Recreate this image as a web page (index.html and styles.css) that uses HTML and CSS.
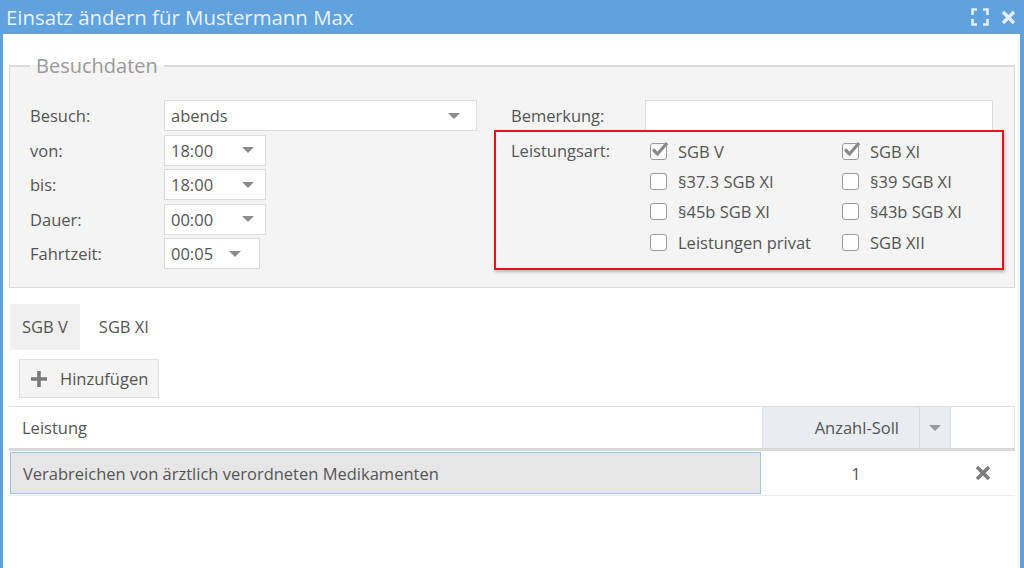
FILE: index.html
```html
<!DOCTYPE html>
<html lang="de">
<head>
  <meta charset="UTF-8" />
  <title>Einsatz ändern</title>
  <link rel="stylesheet" href="styles.css">
</head>
<body>
  <div class="window">
    <div class="titlebar">
      <span class="title">Einsatz ändern für Mustermann Max</span>
      <div class="tools">
        <svg width="18" height="18" viewBox="0 0 18 18"><path d="M1.5 7V1.5H6M12 1.5h4.5V7M16.5 11v5.5H12M6 16.5H1.5V11" fill="none" stroke="currentColor" stroke-width="2.6"/></svg>
        <svg width="15" height="15" viewBox="0 0 15 15"><path d="M2 2l11 11M13 2L2 13" stroke="currentColor" stroke-width="3.4"/></svg>
      </div>
    </div>

    <div class="content">
      <fieldset class="visit">
        <legend>Besuchdaten</legend>
        <div class="visit-body">
          <div class="times">
            <div class="row"><label>Besuch:</label><div class="select wide">abends<i class="caret"></i></div></div>
            <div class="row"><label>von:</label><div class="select">18:00<i class="caret"></i></div></div>
            <div class="row"><label>bis:</label><div class="select">18:00<i class="caret"></i></div></div>
            <div class="row"><label>Dauer:</label><div class="select">00:00<i class="caret"></i></div></div>
            <div class="row"><label>Fahrtzeit:</label><div class="select short">00:05<i class="caret"></i></div></div>
          </div>

          <div class="extra">
            <div class="row note"><label>Bemerkung:</label><div class="textbox"></div></div>
            <div class="types">
              <label class="types-label">Leistungsart:</label>
              <div class="checks">
                <div class="check on"><span class="box"><svg width="18" height="16" viewBox="0 0 18 16"><path d="M2 8.5l4.5 4.5L16 2" fill="none" stroke="#8a8a8a" stroke-width="3.2"/></svg></span>SGB V</div>
                <div class="check on"><span class="box"><svg width="18" height="16" viewBox="0 0 18 16"><path d="M2 8.5l4.5 4.5L16 2" fill="none" stroke="#8a8a8a" stroke-width="3.2"/></svg></span>SGB XI</div>
                <div class="check"><span class="box"></span>§37.3 SGB XI</div>
                <div class="check"><span class="box"></span>§39 SGB XI</div>
                <div class="check"><span class="box"></span>§45b SGB XI</div>
                <div class="check"><span class="box"></span>§43b SGB XI</div>
                <div class="check"><span class="box"></span>Leistungen privat</div>
                <div class="check"><span class="box"></span>SGB XII</div>
              </div>
            </div>
          </div>
        </div>
      </fieldset>

      <div class="tabs">
        <div class="tab active">SGB V</div>
        <div class="tab">SGB XI</div>
      </div>

      <div class="toolbar">
        <button class="add">
          <svg width="18" height="18" viewBox="0 0 18 18"><path d="M9 1v16M1 9h16" stroke="#7a7a7a" stroke-width="3.6"/></svg>
          Hinzufügen
        </button>
      </div>

      <div class="grid">
        <div class="grid-head">
          <div class="col-name">Leistung</div>
          <div class="col-count">Anzahl-Soll</div>
          <div class="col-menu"><i class="caret"></i></div>
          <div class="col-del"></div>
        </div>
        <div class="grid-row">
          <div class="col-name"><div class="cell-selected">Verabreichen von ärztlich verordneten Medikamenten</div></div>
          <div class="col-amount">1</div>
          <div class="col-del del">
            <svg width="16" height="16" viewBox="0 0 16 16"><path d="M2 2l12 12M14 2L2 14" stroke="#7d7d7d" stroke-width="3.6"/></svg>
          </div>
        </div>
      </div>
    </div>
  </div>
</body>
</html>
```

FILE: styles.css
```css
* {
  margin: 0;
  padding: 0;
  box-sizing: border-box;
}

body {
  font-family: 'Open Sans', 'Liberation Sans', sans-serif;
  font-size: 16.5px;
  color: #555;
  background: #fff;
}

.window {
  height: 568px;
  border-left: 3px solid #5fa2dd;
  border-right: 4px solid #5fa2dd;
  background: #fff;
}

.titlebar {
  height: 34px;
  margin: 0 -4px 0 -3px;
  background: #5fa2dd;
  display: flex;
  align-items: center;
  justify-content: space-between;
  padding: 0 8px 0 6px;
  color: #e9f1fa;
}

.title {
  font-size: 20.4px;
}

.tools {
  display: flex;
  align-items: center;
  gap: 12px;
  color: #e6eef8;
}

.content {
  padding: 18px 5px 0 6px;
}

/* Besuchdaten */
.visit {
  border: 1px solid #dadada;
  border-top-width: 2px;
  background: #f4f4f4;
  padding: 20px 10px 17px 20px;
}

.visit legend {
  font-size: 20px;
  color: #9a9a9a;
  padding: 0 6px;
  line-height: 28px;
}

.visit-body {
  display: flex;
  gap: 17px;
}

.times {
  width: 447px;
  display: flex;
  flex-direction: column;
  gap: 3.5px;
}

.row {
  display: flex;
  align-items: center;
}

.row label {
  width: 134px;
}

.select {
  height: 31px;
  width: 102px;
  background: #fff;
  border: 1px solid #dcdcdc;
  padding: 0 6px;
  display: flex;
  align-items: center;
  color: #555;
}

.select.wide {
  width: 313px;
}

.select.short {
  width: 96px;
}

.caret {
  width: 0;
  height: 0;
  border-left: 6px solid transparent;
  border-right: 6px solid transparent;
  border-top: 6px solid #8c8c8c;
  margin-left: auto;
}

.select .caret {
  margin-right: 5px;
}

.select.short .caret {
  margin-right: 12px;
}

.select.wide .caret {
  margin-right: 10px;
}

.extra {
  width: 510px;
  display: flex;
  flex-direction: column;
}

.note {
  padding-left: 17px;
  height: 30px;
}

.textbox {
  height: 31px;
  width: 348px;
  background: #fff;
  border: 1px solid #dcdcdc;
  margin-top: 1px;
}

.types {
  height: 140px;
  border: 2px solid #e3141c;
  box-shadow: 1px 2px 3px rgba(0, 0, 0, 0.25);
  padding: 4px 0 0 15px;
  display: flex;
}

.types-label {
  width: 141px;
  line-height: 30px;
}

.checks {
  display: grid;
  grid-template-columns: 192px 160px;
  grid-auto-rows: 30.3px;
}

.check {
  display: flex;
  align-items: center;
  gap: 11px;
  color: #555;
  white-space: nowrap;
}

.box {
  position: relative;
  flex: none;
  width: 17px;
  height: 17px;
  border: 1.5px solid #9a9a9a;
  border-radius: 3px;
  background: #fff;
}

.box svg {
  position: absolute;
  left: 0;
  top: -3px;
}

/* tabs */
.tabs {
  display: flex;
  gap: 7px;
  margin-top: 16px;
  padding-left: 1px;
}

.tab {
  height: 46px;
  line-height: 46px;
  padding: 0 12px;
  color: #555;
}

.tab.active {
  background: #f0f0f0;
}

.toolbar {
  padding: 9px 0 0 10px;
}

.add {
  height: 39px;
  width: 140px;
  background: #f4f4f4;
  border: 1px solid #e0e0e0;
  font-family: inherit;
  font-size: 16.5px;
  color: #555;
  display: flex;
  align-items: center;
  gap: 12px;
  padding-left: 10px;
}

/* grid */
.grid {
  margin-top: 8px;
  border-top: 1px solid #dedede;
}

.grid-head,
.grid-row {
  display: flex;
}

.grid-head {
  height: 44px;
  border-bottom: 3px solid #d9d9d9;
}

.grid-head > div {
  display: flex;
  align-items: center;
}

.col-name {
  width: 753px;
  padding-left: 13px;
}

.grid-head .col-count {
  width: 157px;
  justify-content: flex-end;
  padding-right: 20px;
  background: #e9edf1;
  border-left: 1px solid #e2e6ea;
}

.col-menu {
  width: 31px;
  background: #e9edf1;
  border-left: 1px solid #d6dade;
  justify-content: center;
}

.col-menu .caret {
  margin: 0;
  border-top-color: #999;
}

.grid-head .col-del {
  width: 65px;
  border-left: 1px solid #dcdcdc;
  border-right: 1px solid #e6e6e6;
}

.grid-row {
  height: 45px;
  border-bottom: 1px solid #ececec;
}

.grid-row .col-name {
  padding: 1px;
}

.cell-selected {
  height: 100%;
  background: #e6e6e6;
  border: 1px solid #9cc5ea;
  padding-left: 12px;
  display: flex;
  align-items: center;
}

.col-amount {
  width: 188px;
  display: flex;
  align-items: center;
  justify-content: center;
}

.del {
  width: 65px;
  display: flex;
  align-items: center;
  justify-content: center;
}
```
